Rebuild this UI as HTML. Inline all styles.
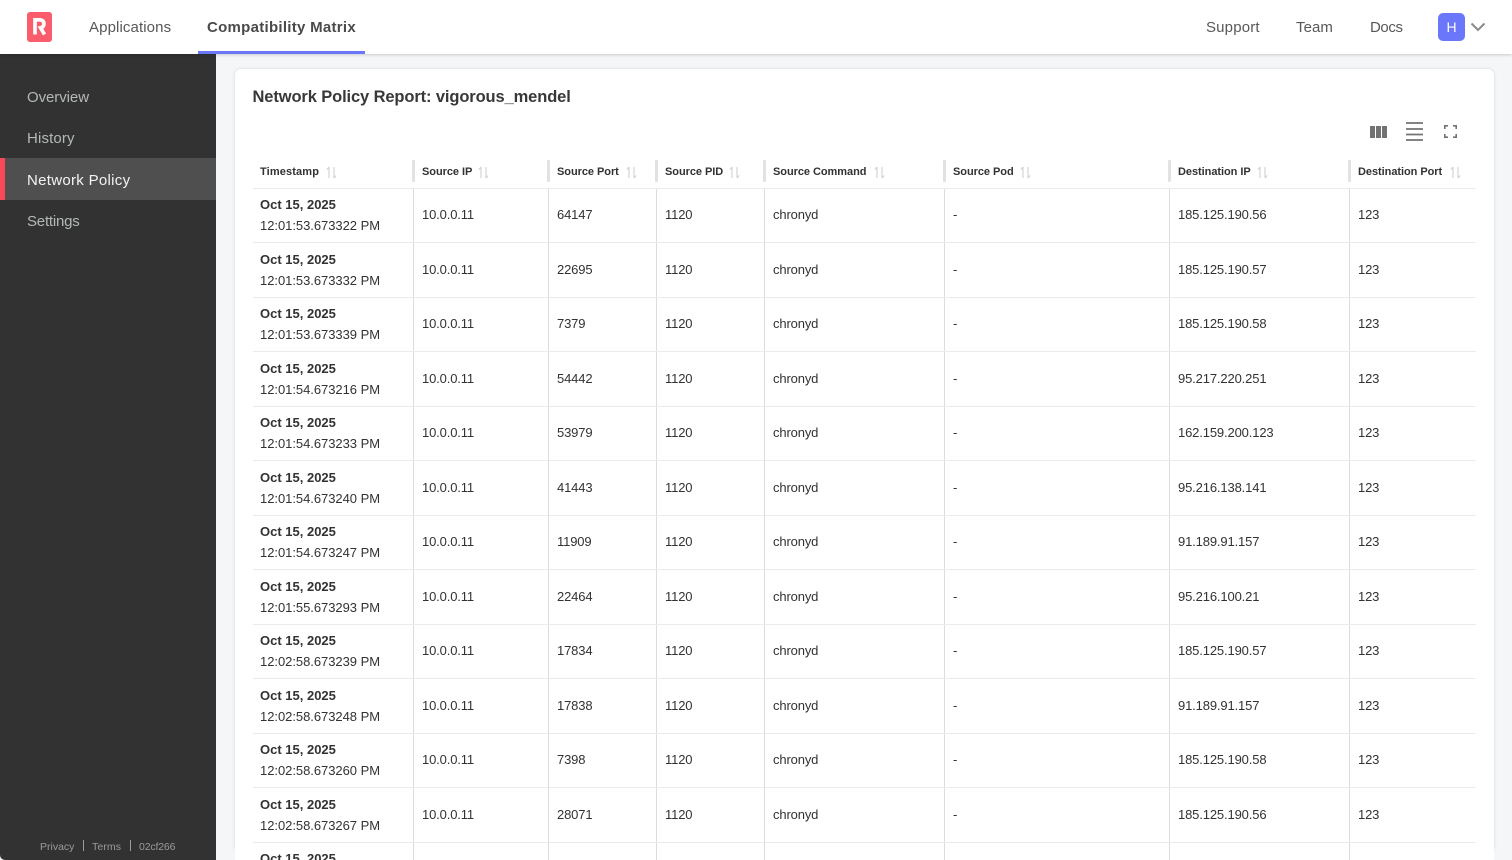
<!DOCTYPE html>
<html><head><meta charset="utf-8"><style>
*{box-sizing:border-box}
html,body{margin:0;padding:0;width:1512px;height:860px;overflow:hidden;background:#f5f6f8;font-family:"Liberation Sans",sans-serif;color:#323232}
#wrap{position:absolute;left:0;top:0;width:1512px;height:860px;overflow:hidden;background:#f5f6f8}
.a{position:absolute;white-space:nowrap}
#top{position:absolute;left:0;top:0;width:1512px;height:54px;background:#fff;box-shadow:0 1px 3px rgba(0,0,0,.18);z-index:3}
.n{font-size:15px;color:#585858;top:18px;line-height:19px}
#side{position:absolute;left:0;top:54px;width:216px;height:806px;background:#323232;z-index:2;border-bottom-left-radius:5px}
.s{font-size:15px;color:#b4b8b8;left:27px;line-height:19px}
#card{position:absolute;left:235px;top:69px;width:1259px;height:780px;background:#fff;border-radius:6px 6px 0 0;box-shadow:0 0 3px rgba(0,0,0,.14)}
#card2{position:absolute;left:235px;top:800px;width:1259px;height:60px;background:#fff}
.h{position:absolute;top:166px;font-size:11px;font-weight:bold;line-height:13px;color:#323232;letter-spacing:-.05px;white-space:nowrap}
.sep{position:absolute;top:160px;width:3px;height:22px;background:#e2e2e2;border-radius:1px}
.v{position:absolute;top:188px;width:1px;height:672px;background:#dcdcdc}
.l{position:absolute;left:253px;width:1223px;height:1px;background:#ebebeb}
.r{position:absolute;left:0;width:1512px;height:54px}
.r div{position:absolute;white-space:nowrap;font-size:13px;line-height:16px;color:#323232;top:19px;letter-spacing:-.14px}
.r .d{left:260px;top:8.500px;font-weight:bold;letter-spacing:0}
.r .t{left:260px;top:30px;letter-spacing:-.04px}
.c1{left:422px}.c2{left:557px}.c3{left:665px}.c4{left:773px}.c5{left:953px}.c6{left:1178px}.c7{left:1358px}
svg{position:absolute;display:block}
</style></head><body><div id="wrap">
<div id="top">
<svg style="left:27px;top:12px" width="26" height="30" viewBox="0 0 26 30"><rect x="0" y="0" width="25" height="30" rx="3" fill="#fb5c6b"/><path d="M8 22.500V7.800h4.500c3 0 4.400 1.500 4.400 4 0 2.300-1.300 3.600-3.300 4l3.900 6.700" fill="none" stroke="#fff" stroke-width="3.700"/></svg>
<div class="a n" style="left:89px;letter-spacing:.11px">Applications</div>
<div class="a n" style="left:207px;font-weight:bold;color:#4a4a4a;letter-spacing:.28px">Compatibility Matrix</div>
<div class="a" style="left:198px;top:51px;width:167px;height:3px;background:#6a77fb"></div>
<div class="a n" style="left:1206px;letter-spacing:.17px">Support</div>
<div class="a n" style="left:1296px;letter-spacing:.08px">Team</div>
<div class="a n" style="left:1370px;letter-spacing:-.4px">Docs</div>
<div class="a" style="left:1438px;top:13px;width:27px;height:28px;background:#6a77fb;border-radius:5px;color:#fff;font-size:14px;line-height:28px;text-align:center">H</div>
<svg style="left:1470px;top:22px" width="16" height="10" viewBox="0 0 16 10"><path d="M1.500 1.500L8 8l6.500-6.500" fill="none" stroke="#8a8a8a" stroke-width="2"/></svg>
</div>
<div id="side">
<div class="a" style="left:0;top:104px;width:216px;height:42px;background:#4f4f4f"></div>
<div class="a" style="left:0;top:104px;width:5px;height:42px;background:#f7485a"></div>
<div class="a s" style="top:33.500px;letter-spacing:-.07px">Overview</div>
<div class="a s" style="top:75px;letter-spacing:.14px">History</div>
<div class="a s" style="top:116.500px;color:#f3f3f3;letter-spacing:.3px">Network Policy</div>
<div class="a s" style="top:158px;letter-spacing:-.2px">Settings</div>
<div class="a" style="left:40px;top:787px;font-size:10.500px;line-height:13px;color:#9b9b9b;letter-spacing:0">Privacy</div>
<div class="a" style="left:83px;top:786px;width:1px;height:11px;background:#9b9b9b"></div>
<div class="a" style="left:92px;top:787px;font-size:10.500px;line-height:13px;color:#9b9b9b;letter-spacing:.1px">Terms</div>
<div class="a" style="left:130px;top:786px;width:1px;height:11px;background:#9b9b9b"></div>
<div class="a" style="left:139px;top:787px;font-size:10.500px;line-height:13px;color:#9b9b9b;letter-spacing:-.15px">02cf266</div>
</div>
<div id="card"></div><div id="card2"></div>
<div class="a" style="left:252.500px;top:87px;font-size:16.500px;line-height:20px;font-weight:bold;color:#383838;letter-spacing:-.12px">Network Policy Report: vigorous_mendel</div>
<svg style="left:1370px;top:126px" width="17" height="12" viewBox="0 0 17 12"><path d="M0 0h5v12H0zM6 0h5v12H6zM12 0h5v12h-5z" fill="#737373"/></svg>
<svg style="left:1406px;top:122px" width="17" height="19" viewBox="0 0 17 19"><path d="M0 1h17M0 7h17M0 12.500h17M0 18h17" stroke="#737373" stroke-width="1.700" fill="none"/></svg>
<svg style="left:1444px;top:125px" width="13" height="13" viewBox="0 0 13 13"><path d="M.8 4V.8H4M9 .8h3.200V4M12.200 9v3.200H9M4 12.200H.8V9" stroke="#737373" stroke-width="1.600" fill="none"/></svg>

<div class="h" style="left:260px;letter-spacing:.13px">Timestamp</div>
<div class="h" style="left:422px">Source IP</div>
<div class="h" style="left:557px">Source Port</div>
<div class="h" style="left:665px">Source PID</div>
<div class="h" style="left:773px">Source Command</div>
<div class="h" style="left:953px">Source Pod</div>
<div class="h" style="left:1178px">Destination IP</div>
<div class="h" style="left:1358px">Destination Port</div>

<svg style="left:326px;top:166px" width="11" height="13" viewBox="0 0 11 13"><path d="M3 12V1M1 3.500L3 1M8 1v11M10 9.500L8 12" stroke="#d0d0d0" stroke-width="1.100" fill="none"/></svg>
<svg style="left:478px;top:166px" width="11" height="13" viewBox="0 0 11 13"><path d="M3 12V1M1 3.500L3 1M8 1v11M10 9.500L8 12" stroke="#d0d0d0" stroke-width="1.100" fill="none"/></svg>
<svg style="left:626px;top:166px" width="11" height="13" viewBox="0 0 11 13"><path d="M3 12V1M1 3.500L3 1M8 1v11M10 9.500L8 12" stroke="#d0d0d0" stroke-width="1.100" fill="none"/></svg>
<svg style="left:729px;top:166px" width="11" height="13" viewBox="0 0 11 13"><path d="M3 12V1M1 3.500L3 1M8 1v11M10 9.500L8 12" stroke="#d0d0d0" stroke-width="1.100" fill="none"/></svg>
<svg style="left:874px;top:166px" width="11" height="13" viewBox="0 0 11 13"><path d="M3 12V1M1 3.500L3 1M8 1v11M10 9.500L8 12" stroke="#d0d0d0" stroke-width="1.100" fill="none"/></svg>
<svg style="left:1020px;top:166px" width="11" height="13" viewBox="0 0 11 13"><path d="M3 12V1M1 3.500L3 1M8 1v11M10 9.500L8 12" stroke="#d0d0d0" stroke-width="1.100" fill="none"/></svg>
<svg style="left:1257px;top:166px" width="11" height="13" viewBox="0 0 11 13"><path d="M3 12V1M1 3.500L3 1M8 1v11M10 9.500L8 12" stroke="#d0d0d0" stroke-width="1.100" fill="none"/></svg>
<svg style="left:1450px;top:166px" width="11" height="13" viewBox="0 0 11 13"><path d="M3 12V1M1 3.500L3 1M8 1v11M10 9.500L8 12" stroke="#d0d0d0" stroke-width="1.100" fill="none"/></svg>

<div class="sep" style="left:412px"></div><div class="sep" style="left:547px"></div><div class="sep" style="left:655px"></div><div class="sep" style="left:763px"></div><div class="sep" style="left:943px"></div><div class="sep" style="left:1168px"></div><div class="sep" style="left:1348px"></div>
<div class="v" style="left:413px"></div><div class="v" style="left:548px"></div><div class="v" style="left:656px"></div><div class="v" style="left:764px"></div><div class="v" style="left:944px"></div><div class="v" style="left:1169px"></div><div class="v" style="left:1349px"></div>

<div class="l" style="top:188px"></div><div class="l" style="top:242px"></div><div class="l" style="top:297px"></div><div class="l" style="top:351px"></div><div class="l" style="top:406px"></div><div class="l" style="top:460px"></div><div class="l" style="top:515px"></div><div class="l" style="top:569px"></div><div class="l" style="top:624px"></div><div class="l" style="top:678px"></div><div class="l" style="top:733px"></div><div class="l" style="top:787px"></div><div class="l" style="top:842px"></div>

<div class="r" style="top:188px"><div class="d">Oct 15, 2025</div><div class="t">12:01:53.673322 PM</div><div class="c1">10.0.0.11</div><div class="c2">64147</div><div class="c3">1120</div><div class="c4">chronyd</div><div class="c5">-</div><div class="c6">185.125.190.56</div><div class="c7">123</div></div>
<div class="r" style="top:243px"><div class="d">Oct 15, 2025</div><div class="t">12:01:53.673332 PM</div><div class="c1">10.0.0.11</div><div class="c2">22695</div><div class="c3">1120</div><div class="c4">chronyd</div><div class="c5">-</div><div class="c6">185.125.190.57</div><div class="c7">123</div></div>
<div class="r" style="top:297px"><div class="d">Oct 15, 2025</div><div class="t">12:01:53.673339 PM</div><div class="c1">10.0.0.11</div><div class="c2">7379</div><div class="c3">1120</div><div class="c4">chronyd</div><div class="c5">-</div><div class="c6">185.125.190.58</div><div class="c7">123</div></div>
<div class="r" style="top:352px"><div class="d">Oct 15, 2025</div><div class="t">12:01:54.673216 PM</div><div class="c1">10.0.0.11</div><div class="c2">54442</div><div class="c3">1120</div><div class="c4">chronyd</div><div class="c5">-</div><div class="c6">95.217.220.251</div><div class="c7">123</div></div>
<div class="r" style="top:406px"><div class="d">Oct 15, 2025</div><div class="t">12:01:54.673233 PM</div><div class="c1">10.0.0.11</div><div class="c2">53979</div><div class="c3">1120</div><div class="c4">chronyd</div><div class="c5">-</div><div class="c6">162.159.200.123</div><div class="c7">123</div></div>
<div class="r" style="top:461px"><div class="d">Oct 15, 2025</div><div class="t">12:01:54.673240 PM</div><div class="c1">10.0.0.11</div><div class="c2">41443</div><div class="c3">1120</div><div class="c4">chronyd</div><div class="c5">-</div><div class="c6">95.216.138.141</div><div class="c7">123</div></div>
<div class="r" style="top:515px"><div class="d">Oct 15, 2025</div><div class="t">12:01:54.673247 PM</div><div class="c1">10.0.0.11</div><div class="c2">11909</div><div class="c3">1120</div><div class="c4">chronyd</div><div class="c5">-</div><div class="c6">91.189.91.157</div><div class="c7">123</div></div>
<div class="r" style="top:570px"><div class="d">Oct 15, 2025</div><div class="t">12:01:55.673293 PM</div><div class="c1">10.0.0.11</div><div class="c2">22464</div><div class="c3">1120</div><div class="c4">chronyd</div><div class="c5">-</div><div class="c6">95.216.100.21</div><div class="c7">123</div></div>
<div class="r" style="top:624px"><div class="d">Oct 15, 2025</div><div class="t">12:02:58.673239 PM</div><div class="c1">10.0.0.11</div><div class="c2">17834</div><div class="c3">1120</div><div class="c4">chronyd</div><div class="c5">-</div><div class="c6">185.125.190.57</div><div class="c7">123</div></div>
<div class="r" style="top:679px"><div class="d">Oct 15, 2025</div><div class="t">12:02:58.673248 PM</div><div class="c1">10.0.0.11</div><div class="c2">17838</div><div class="c3">1120</div><div class="c4">chronyd</div><div class="c5">-</div><div class="c6">91.189.91.157</div><div class="c7">123</div></div>
<div class="r" style="top:733px"><div class="d">Oct 15, 2025</div><div class="t">12:02:58.673260 PM</div><div class="c1">10.0.0.11</div><div class="c2">7398</div><div class="c3">1120</div><div class="c4">chronyd</div><div class="c5">-</div><div class="c6">185.125.190.58</div><div class="c7">123</div></div>
<div class="r" style="top:788px"><div class="d">Oct 15, 2025</div><div class="t">12:02:58.673267 PM</div><div class="c1">10.0.0.11</div><div class="c2">28071</div><div class="c3">1120</div><div class="c4">chronyd</div><div class="c5">-</div><div class="c6">185.125.190.56</div><div class="c7">123</div></div>
<div class="r" style="top:842px"><div class="d">Oct 15, 2025</div></div>
</div></body></html>
